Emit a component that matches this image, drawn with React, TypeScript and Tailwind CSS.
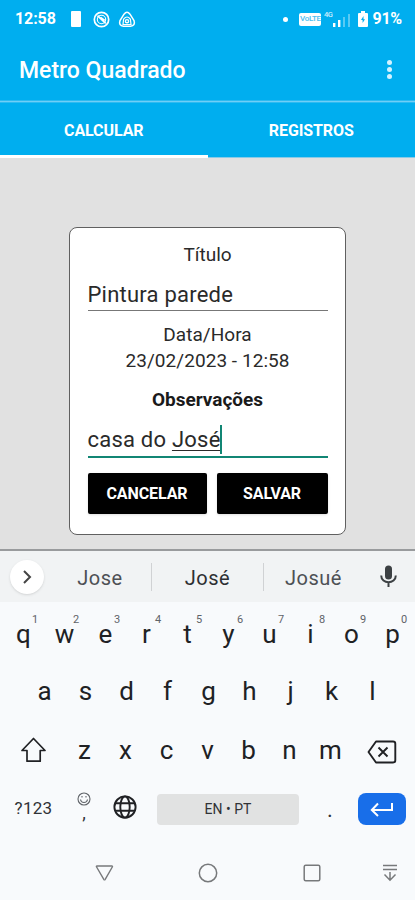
import React from 'react';

type KeyProps = {
  label: string;
  hint?: string;
};

const firstRow = ['q', 'w', 'e', 'r', 't', 'y', 'u', 'i', 'o', 'p'];
const secondRow = ['a', 's', 'd', 'f', 'g', 'h', 'j', 'k', 'l'];
const thirdRow = ['z', 'x', 'c', 'v', 'b', 'n', 'm'];

const Key: React.FC<KeyProps> = ({ label, hint }) => (
  <div className="relative flex w-[41px] shrink-0 items-center justify-center text-[26px] leading-[30px] text-[#202124]">
    {label}
    {hint && (
      <span className="absolute top-[-6px] left-[29px] text-[11px] leading-[14px] text-[#5f6368]">
        {hint}
      </span>
    )}
  </div>
);

const StatusBar = () => (
  <div className="flex h-[38px] items-center pl-[15px] pr-[13px] text-[16px] font-bold text-white">
    <span className="w-[56px] tracking-[-0.1px]">12:58</span>
    <div className="h-4 w-[10px] rounded-[1px] bg-white"></div>
    <svg className="ml-3 h-[17px] w-[17px]" viewBox="0 0 17 17" fill="none" stroke="white">
      <circle cx="8.5" cy="8.5" r="7.2" strokeWidth="1.7" />
      <circle cx="8.5" cy="8.5" r="4.2" strokeWidth="1.1" />
      <path d="M4.5 4.7 12.7 12.4M7.5 6.4l4.2 3.1" strokeWidth="1.8" />
    </svg>
    <svg className="ml-[8px] h-[17px] w-[18px]" viewBox="0 0 18 17" fill="none" stroke="white">
      <path d="M6 3.2Q9 -.6 12 3.2L16 9.6Q17.6 14.6 12.5 15.2H5.5Q.4 14.6 2 9.6z" strokeWidth="1.5" />
      <path d="M5 13.5 5.6 8.2Q9 3.8 12.4 8.2L13 13.5z" strokeWidth="1.2" />
      <circle cx="9" cy="10.2" r="1.6" strokeWidth="1.4" />
    </svg>
    <div className="ml-auto h-[5px] w-[5px] rounded-full bg-white"></div>
    <div className="ml-[11px] flex h-[13px] w-[22px] items-center justify-center rounded-[2px] bg-white text-[8px] font-medium tracking-[-0.3px] text-[#4bbdf0]">
      VoLTE
    </div>
    <svg className="ml-[3px] h-[18px] w-[27px]" viewBox="0 0 27 18">
      <text x="0" y="7" fill="white" fillOpacity=".8" fontSize="7.5" fontWeight="500" letterSpacing="-.5">4G</text>
      <path d="M9 13h2.4v4H9zM14 10h2.4v7H14z" fill="white" />
      <path d="M19 7h2v10h-2zM24 4h2v13h-2z" fill="white" fillOpacity=".35" />
    </svg>
    <svg className="ml-[7px] h-4 w-[10px]" viewBox="0 0 10 16">
      <path d="M3 0h4v2h2q1 0 1 1v12q0 1-1 1H1q-1 0-1-1V3q0-1 1-1h2z" fill="white" />
      <path d="M5.5 5 3 9H4.6v3L7 8.2H5.5z" fill="#00aeef" />
    </svg>
    <span className="ml-[4px] tracking-[-0.2px]">91%</span>
  </div>
);

const Header = () => (
  <header className="h-[157px] bg-[#00aeef] text-white">
    <StatusBar />
    <div className="flex h-[62px] items-center justify-between pl-[19px] pr-[23px]">
      <h1 className="text-[23px] font-medium leading-7 tracking-[-0.02px] pt-[4px]">Metro Quadrado</h1>
      <div className="flex flex-col gap-[2px]">
        <div className="h-[5px] w-[5px] rounded-full bg-[#d4f3ff]"></div>
        <div className="h-[5px] w-[5px] rounded-full bg-[#d4f3ff]"></div>
        <div className="h-[5px] w-[5px] rounded-full bg-[#d4f3ff]"></div>
      </div>
    </div>
    <div className="h-[3px] border-y border-[#2dbaf1] bg-[#70cef6]"></div>
    <div className="grid h-[55px] grid-cols-2 text-[16px] font-bold tracking-[-0.1px]">
      <div className="flex items-center justify-center border-b-[3px] border-white pt-[4px]">CALCULAR</div>
      <div className="flex items-center justify-center border-b border-[#8acbe7] pt-[2px]">REGISTROS</div>
    </div>
  </header>
);

const SaveDialog = () => (
  <div className="mx-auto flex h-[308px] w-[277px] flex-col rounded-[8px] border-[1.5px] border-[#606060] bg-white px-[17.5px] text-[#2a2a2a]">
    <div className="mt-[15px] text-center text-[19px] leading-6">Título</div>
    <div className="mt-[11px] flex h-[33px] items-center border-b border-[#777] text-[22px] tracking-[0.22px]">
      Pintura parede
    </div>
    <div className="mt-[11px] text-center text-[19px] leading-[26px] tracking-[0.05px]">
      <div>Data/Hora</div>
      <div>23/02/2023 - 12:58</div>
    </div>
    <div className="mt-[13px] text-center text-[19px] font-bold leading-[26px] text-[#1a1a1a]">Observações</div>
    <div className="mt-[9px] flex h-[36px] items-center border-b-2 border-[#118674] text-[22px] tracking-[0.22px]">
      <span className="whitespace-pre">casa do </span>
      <span className="underline decoration-1 underline-offset-[3px]">José</span>
      <span className="h-[29px] w-[2px] -ml-px bg-[#118674]"></span>
    </div>
    <div className="mt-[15px] flex h-[41px] gap-[10px] text-[16px] font-bold tracking-[-0.1px] text-white">
      <button className="w-[119px] rounded-[2px] bg-black pt-px shadow-sm">CANCELAR</button>
      <button className="flex-1 rounded-[2px] bg-black pt-px shadow-sm">SALVAR</button>
    </div>
  </div>
);

const Suggestions = () => (
  <div className="flex h-[51px] items-center bg-[#f1f3f4] text-[20px] tracking-[0.5px] text-[#4d5054]">
    <div className="ml-[10px] flex h-[34px] w-[34px] items-center justify-center rounded-full bg-white shadow-sm">
      <svg className="h-[14px] w-[9px]" viewBox="0 0 9 14" fill="none" stroke="#444" strokeWidth="2">
        <path d="m1 1 6 6-6 6" />
      </svg>
    </div>
    <div className="ml-[5px] w-[102px] pt-[2px] text-center">Jose</div>
    <div className="h-[28px] w-px bg-[#d0d2d4]"></div>
    <div className="w-[111px] pt-[2px] text-center text-[#2d2f32]">José</div>
    <div className="h-[28px] w-px bg-[#d0d2d4]"></div>
    <div className="w-[99px] pt-[2px] text-center">Josué</div>
    <svg className="ml-[17px] h-[23px] w-[17px]" viewBox="0 0 17 23">
      <rect x="5" y="0.5" width="7" height="14" rx="3.5" fill="#3c4043" />
      <path d="M1.2 10.5c0 9 14.6 9 14.6 0M8.5 17.5V22" fill="none" stroke="#3c4043" strokeWidth="2" />
    </svg>
  </div>
);

const Keyboard = () => (
  <div className="h-[351px] border-t-2 border-[#999b9d] bg-[#f8fafc]">
    <Suggestions />
    <div className="flex pl-[3px] pt-[17px]">
      {firstRow.map((k, i) => (
        <Key key={k} label={k} hint={String((i + 1) % 10)} />
      ))}
    </div>
    <div className="mt-[27px] flex pl-[24px]">
      {secondRow.map((k) => (
        <Key key={k} label={k} />
      ))}
    </div>
    <div className="mt-[29px] flex items-center">
      <svg className="ml-[20px] mr-[18px] h-[26px] w-[26px]" viewBox="0 0 26 26" fill="none" stroke="#202124" strokeWidth="1.7">
        <path d="M13.5 1.5 25 13.5H20.2v10.7H7V13.5H2z" strokeLinejoin="round" />
      </svg>
      {thirdRow.map((k) => (
        <Key key={k} label={k} />
      ))}
      <svg className="ml-[16px] mt-[3px] h-[24px] w-[30px]" viewBox="0 0 30 24" fill="none" stroke="#202124" strokeWidth="1.9">
        <path d="M9 1.5h17q2.3 0 2.3 2.3v16.4q0 2.3-2.3 2.3H9L1.5 12z" strokeLinejoin="round" />
        <path d="m11.5 7.5 9 9m0-9-9 9" />
      </svg>
    </div>
    <div className="mt-[28px] flex h-[32px] items-center text-[#303236]">
      <div className="w-[67px] pb-px text-center text-[17px] tracking-[0.3px]">?123</div>
      <div className="flex w-[34px] flex-col items-center pb-[6px]">
        <svg className="h-[14px] w-[14px]" viewBox="0 0 14 14" fill="none" stroke="#5f6368" strokeWidth="1.1">
          <circle cx="7" cy="7" r="6" />
          <path d="M3.5 7.5c.6 4 6.4 4 7 0M5 4v1.6M9 4v1.6" />
        </svg>
        <span className="text-[18px] leading-[17px] -mt-[2px]">,</span>
      </div>
      <svg className="ml-[12px] mb-[5px] h-[24px] w-[24px]" viewBox="0 0 24 24" fill="none" stroke="#202124" strokeWidth="1.9">
        <circle cx="12" cy="12" r="10.6" />
        <ellipse cx="12" cy="12" rx="4.7" ry="10.6" />
        <path d="M2.2 8.3h19.6M2.2 15.7h19.6" />
      </svg>
      <div className="ml-[20px] flex h-[31px] w-[142px] items-center justify-center rounded-[4px] bg-[#e1e2e2] pt-px text-[14px]">
        EN • PT
      </div>
      <div className="w-[59px] pl-[3px] text-center text-[22px]">.</div>
      <div className="flex h-[32px] w-[48px] items-center justify-center rounded-[8px] bg-[#186ee9]">
        <svg className="h-[16px] w-[24px]" viewBox="0 0 24 16" fill="none" stroke="white" strokeWidth="2">
          <path d="M22 2v7H2M8 2.5 1.8 9 8 15" />
        </svg>
      </div>
    </div>
    <div className="mt-[36px] flex h-[24px] items-center text-[#77797b]">
      <svg className="ml-[95px] h-[18px] w-[19px]" viewBox="0 0 19 18" fill="none" stroke="currentColor" strokeWidth="1.4">
        <path d="M2 2h14.8q1 0 .5 1L10.2 15.3q-.7 1.1-1.4 0L1.6 3Q1 2 2 2z" />
      </svg>
      <svg className="ml-[84px] h-[20px] w-[20px]" viewBox="0 0 20 20" fill="none" stroke="currentColor" strokeWidth="1.5">
        <circle cx="10" cy="10" r="8.7" />
      </svg>
      <svg className="ml-[85px] h-[18px] w-[18px]" viewBox="0 0 18 18" fill="none" stroke="currentColor" strokeWidth="1.5">
        <rect x="1.2" y="1.2" width="15.6" height="15.6" rx="1.5" />
      </svg>
      <svg className="ml-[61px] h-[18px] w-[16px]" viewBox="0 0 16 18" fill="none" stroke="currentColor" strokeWidth="1.5">
        <path d="M1 1.5h14M1 5.5h14M8 8v8M2.5 10.5 8 16.2l5.5-5.7" />
      </svg>
    </div>
  </div>
);

const App: React.FC = () => {
  return (
    <div className="flex h-[900px] w-[415px] flex-col overflow-hidden bg-[#e1e1e1] font-[Roboto,'Noto_Sans',sans-serif]">
      <Header />
      <main className="flex-1 pt-[70px]">
        <SaveDialog />
      </main>
      <Keyboard />
    </div>
  );
};

export default App;
